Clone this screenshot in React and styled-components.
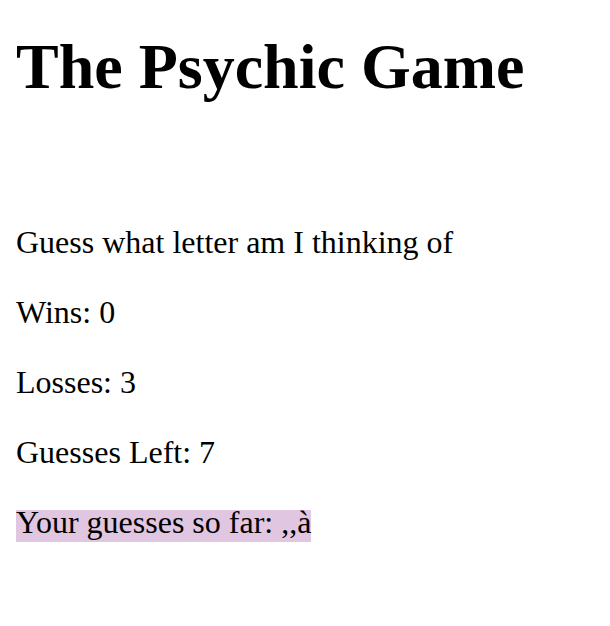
import React from 'react';
import styled, { createGlobalStyle } from 'styled-components';

const GlobalStyle = createGlobalStyle`
  body {
    margin: 0;
    background: #ffffff;
    color: #000000;
    font-family: "Liberation Serif", "Times New Roman", serif;
  }
`;

const Page = styled.main`
  padding: 35px 16px 0;
`;

const Title = styled.h1`
  margin: 0 0 124px;
  font-size: 64px;
  line-height: 64px;
  font-weight: bold;
`;

const Stats = styled.section`
  display: flex;
  flex-direction: column;
  gap: 32px;
`;

const Line = styled.p`
  margin: 0;
  font-size: 32px;
  line-height: 38px;
`;

const Highlight = styled.span`
  display: inline-block;
  height: 32px;
  line-height: 24px;
  vertical-align: baseline;
  background: #e0c6e1;
`;

const game = {
  wins: 0,
  losses: 3,
  guessesLeft: 7,
  guesses: ['', '', 'à'],
};

const App = () => {
  return (
    <>
      <GlobalStyle />
      <Page>
        <Title>The Psychic Game</Title>
        <Stats>
          <Line>Guess what letter am I thinking of</Line>
          <Line>Wins: {game.wins}</Line>
          <Line>Losses: {game.losses}</Line>
          <Line>Guesses Left: {game.guessesLeft}</Line>
          <Line>
            <Highlight>Your guesses so far: {game.guesses.join(',')}</Highlight>
          </Line>
        </Stats>
      </Page>
    </>
  );
};

export default App;
